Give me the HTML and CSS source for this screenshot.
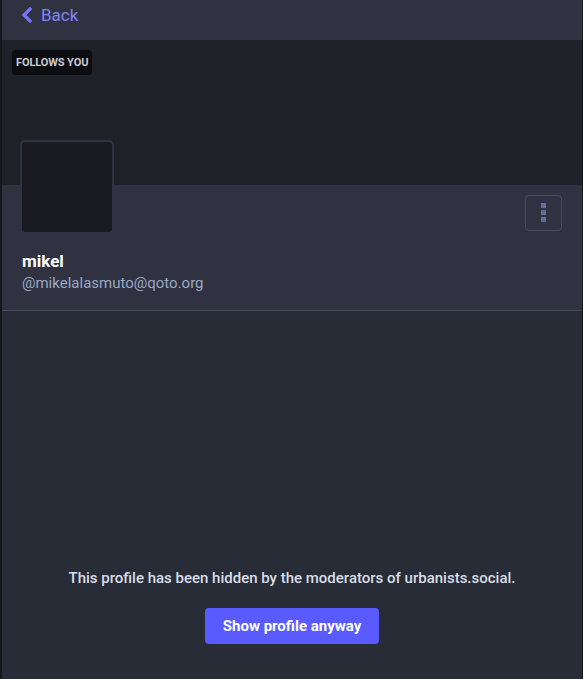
FILE: index.html
```html
<!DOCTYPE html>
<html>
<head>
<meta charset="utf-8">
<link rel="stylesheet" href="styles.css">
</head>
<body>
<div class="column">
  <header class="topbar">
    <a class="back" href="#">
      <svg class="back-icon" width="12" height="16" viewBox="0 0 12 16"><path d="M9 2 L3 8 L9 14" fill="none" stroke="currentColor" stroke-width="3.2" stroke-linejoin="miter" stroke-linecap="square"/></svg>
      <span>Back</span>
    </a>
  </header>
  <div class="banner">
    <span class="badge">FOLLOWS YOU</span>
  </div>
  <section class="profile">
    <div class="profile-top">
      <div class="avatar"></div>
      <button class="more" aria-label="More">
        <svg width="6" height="20" viewBox="0 0 6 20"><rect x="0" y="0" width="5" height="5"/><rect x="0" y="7" width="5" height="5"/><rect x="0" y="14" width="5" height="5"/></svg>
      </button>
    </div>
    <div class="names">
      <div class="display-name">mikel</div>
      <div class="handle">@mikelalasmuto@qoto.org</div>
    </div>
  </section>
  <main class="hidden">
    <p class="notice">This profile has been hidden by the moderators of urbanists.social.</p>
    <button class="show">Show profile anyway</button>
  </main>
</div>
</body>
</html>
```
FILE: styles.css
```css
html, body {
  margin: 0;
  padding: 0;
  height: 100%;
  background: #16171d;
}
body {
  font-family: Roboto, "Liberation Sans", sans-serif;
}
.column {
  margin-left: 2px;
  margin-right: 1px;
  height: 679px;
  display: flex;
  flex-direction: column;
  background: #282c37;
}
.topbar {
  height: 40px;
  background: #303241;
  display: flex;
  align-items: center;
  padding-left: 19px;
  flex-shrink: 0;
}
.back {
  display: flex;
  align-items: center;
  gap: 8px;
  color: #8085f2;
  text-decoration: none;
  font-size: 17px;
  margin-top: -10px;
}
.back-icon { color: #7377f5; }
.banner {
  height: 145px;
  background: #1f2129;
  padding: 10px 0 0 10px;
  box-sizing: border-box;
  flex-shrink: 0;
}
.badge {
  display: inline-block;
  background: #0c0d10;
  color: #c9cad0;
  font-size: 11px;
  font-weight: 700;
  padding: 6px 4px 6px 4px;
  border-radius: 4px;
  letter-spacing: -0.1px;
  line-height: 13px;
}
.profile {
  background: #303241;
  height: 125px;
  border-bottom: 1px solid #474a5c;
  padding: 0 20px 0 18px;
  flex-shrink: 0;
  box-sizing: border-box;
  height: 126px;
}
.profile-top {
  display: flex;
  justify-content: space-between;
  align-items: flex-start;
  height: 48px;
}
.avatar {
  width: 90px;
  height: 90px;
  background: #1a1b20;
  border: 2px solid #303241;
  border-radius: 5px;
  margin-top: -45px;
}
.more {
  margin-top: 10px;
  width: 37px;
  height: 36px;
  background: transparent;
  border: 1px solid #464a5e;
  border-radius: 4px;
  display: flex;
  align-items: center;
  justify-content: center;
  padding: 0;
  fill: #646b96;
}
.names {
  padding-left: 2px;
  padding-top: 18px;
}
.display-name {
  color: #ffffff;
  font-weight: 700;
  font-size: 17px;
  line-height: 20px;
}
.handle {
  color: #9aa8c8;
  font-size: 15px;
  line-height: 24px;
}
.hidden {
  flex: 1;
  display: flex;
  flex-direction: column;
  align-items: center;
  justify-content: flex-end;
  padding-bottom: 35px;
}
.notice {
  margin: 0 0 21px;
  color: #d9dde8;
  font-size: 15px;
  font-weight: 500;
  line-height: 18px;
}
.show {
  background: #595aff;
  color: #ffffff;
  border: 0;
  border-radius: 4px;
  width: 174px;
  height: 36px;
  font-family: inherit;
  font-size: 15px;
  font-weight: 700;
}
```
